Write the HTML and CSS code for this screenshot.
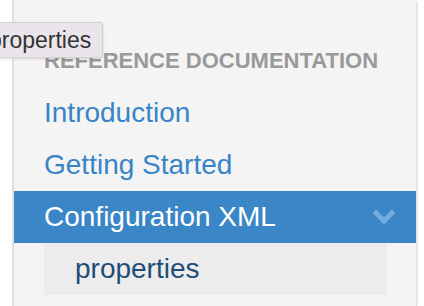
FILE: index.html
```html
<!DOCTYPE html>
<html lang="en">
<head>
    <meta charset="UTF-8">
    <meta name="viewport" content="width=device-width, initial-scale=1.0">
    <title>docs sidebar</title>
    <link rel="stylesheet" href="styles.css">
</head>
<body>
    <nav class="sidebar">
        <h2 class="sidebar-title">Reference Documentation</h2>
        <ul class="nav-list">
            <li class="nav-item"><a href="#">Introduction</a></li>
            <li class="nav-item"><a href="#">Getting Started</a></li>
            <li class="nav-item active">
                <a href="#">Configuration XML</a>
                <svg class="chevron" width="22" height="14" viewBox="0 0 22 14">
                    <polyline points="3,3 11,11 19,3" fill="none" stroke="#ffffff" stroke-width="5" stroke-linecap="square"/>
                </svg>
            </li>
            <li class="sub-item"><a href="#">properties</a></li>
        </ul>
    </nav>

    <div class="tooltip">properties</div>
</body>
</html>
```

FILE: styles.css
```css
body {
    margin: 0;
    background-color: #ffffff;
    font-family: "Liberation Sans", Arial, sans-serif;
    overflow: hidden;
}
.sidebar {
    margin-left: 12px;
    width: 402px;
    height: 258px;
    padding-top: 48px;
    background-color: #f4f4f4; /* panel grey */
    border: 1px solid #e0e0e0;
    border-left-width: 2px;
    border-top: none;
    border-bottom: none;
    border-radius: 0 4px 0 0;
    box-shadow: 1px 0 2px rgba(0, 0, 0, 0.08);
}
.sidebar-title {
    margin: 0 0 13px 30px;
    font-size: 22px;
    line-height: 26px;
    font-weight: bold;
    text-transform: uppercase;
    color: #999999;
}
.nav-list {
    list-style: none;
    margin: 0;
    padding: 0;
}
.nav-item {
    display: flex;
    align-items: center;
    justify-content: space-between;
    height: 52px;
    padding: 0 21px 0 30px;
}
.nav-item a {
    font-size: 28px;
    line-height: 52px;
    color: #3884c6;
    text-decoration: none;
}
.nav-item.active {
    background-color: #3a86c7; /* selected row */
}
.nav-item.active a {
    color: #ffffff;
}
.chevron {
    opacity: 0.3;
}
.sub-item {
    margin: 0 29px 0 30px;
    padding-left: 31px;
    height: 52px;
    background-color: #ececec;
}
.sub-item a {
    font-size: 28px;
    line-height: 52px;
    color: #1f4d76;
    text-decoration: none;
}
.tooltip {
    position: absolute;
    top: 22px;
    left: -22px;
    padding: 0 11px 0 10px;
    height: 34px;
    line-height: 34px;
    font-size: 23px;
    color: #333333;
    background-color: #e9e5ea;
    border: 1px solid #d3cfd5;
    border-radius: 3px;
    box-shadow: 0 1px 3px rgba(0, 0, 0, 0.12);
}
```
